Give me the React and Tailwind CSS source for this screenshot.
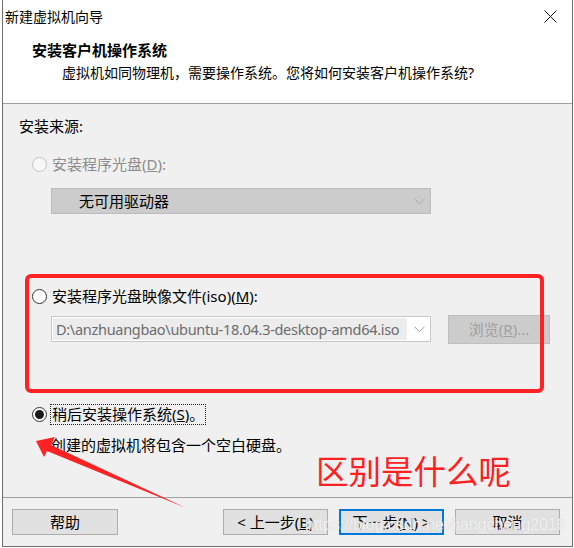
import React from 'react';

const ui = "font-['Noto_Sans','Noto_Sans_CJK_SC',sans-serif]";

function Radio({ state }) {
  if (state === 'disabled') {
    return <div className="w-[15px] h-[15px] rounded-full border border-[#c4c4c4] bg-[#f7f7f7] shrink-0" />;
  }
  return (
    <div className="w-[15px] h-[15px] rounded-full border border-[#333333] bg-white shrink-0 flex items-center justify-center">
      {state === 'on' && <div className="w-[9px] h-[9px] rounded-full bg-[#1a1a1a]" />}
    </div>
  );
}

function Chevron({ color }) {
  return (
    <svg width="11" height="7" viewBox="0 0 11 7" className="shrink-0">
      <path d="M0.5 0.8L5.5 5.8L10.5 0.8" fill="none" stroke={color} strokeWidth="1" />
    </svg>
  );
}

function Button({ children, primary }) {
  return (
    <div
      className={`w-[105px] h-[26px] flex items-center justify-center text-[15px] leading-none text-black bg-[#e1e1e1] ${
        primary ? 'border-2 border-[#0078d7]' : 'border border-[#adadad]'
      }`}
    >
      {children}
    </div>
  );
}

export default function App() {
  return (
    <div className={`relative w-[574px] h-[548px] bg-white overflow-hidden ${ui}`}>
      <div className="ml-[2px] w-[571px] h-[547px] border-x border-b border-[#6f6f6f] bg-[#f0f0f0] flex flex-col">
        {/* title bar */}
        <div className="h-[33px] bg-white flex items-center justify-between pl-[2px] pr-[15px]">
          <span className="text-[14px] leading-none text-black">新建虚拟机向导</span>
          <svg width="13" height="13" viewBox="0 0 13 13">
            <path d="M0.5 0.5L12.5 12.5M12.5 0.5L0.5 12.5" stroke="#111" strokeWidth="1" />
          </svg>
        </div>

        {/* header */}
        <div className="h-[71px] bg-white border-b border-[#a0a0a0] flex flex-col">
          <div className="mt-[7px] h-[20px] pl-[29px] flex items-center text-[15px] font-bold leading-none text-black">
            安装客户机操作系统
          </div>
          <div className="mt-[3px] h-[20px] pl-[59px] flex items-center text-[14px] leading-none text-black">
            虚拟机如同物理机，需要操作系统。您将如何安装客户机操作系统?
          </div>
        </div>

        {/* body */}
        <div className="flex-1 flex flex-col text-[15px] leading-none text-black">
          <div className="mt-[12px] h-[20px] pl-[16px] flex items-center">安装来源:</div>

          <div className="mt-[18px] h-[20px] pl-[29px] flex items-center gap-[5px] text-[#8c8c8c]">
            <Radio state="disabled" />
            <span>
              安装程序光盘(<span className="underline">D</span>):
            </span>
          </div>

          <div className="mt-[14px] ml-[48px] w-[380px] h-[26px] bg-[#cccccc] border border-[#bcbcbc] flex items-center justify-between pl-[27px] pr-[5px]">
            <span>无可用驱动器</span>
            <Chevron color="#a8a8a8" />
          </div>

          <div className="mt-[72px] h-[20px] pl-[29px] flex items-center gap-[5px]">
            <Radio state="off" />
            <span>
              安装程序光盘映像文件(iso)(<span className="underline">M</span>):
            </span>
          </div>

          <div className="mt-[9px] pl-[48px] flex items-start">
            <div className="mt-[1px] w-[380px] h-[26px] bg-white border border-[#c8c8c8] flex items-center justify-between pl-[1px] pr-[5px]">
              <div className="h-[22px] w-[354px] bg-[#ececec] flex items-center pl-[3px] text-[14.5px] text-[#6d6d6d] font-['Noto_Sans',sans-serif] tracking-[-0.3px] overflow-hidden whitespace-nowrap">
                D:\anzhuangbao\ubuntu-18.04.3-desktop-amd64.iso
              </div>
              <Chevron color="#9a9a9a" />
            </div>
            <div className="ml-[17px] w-[102px] h-[29px] bg-[#cccccc] border border-[#bfbfbf] flex items-center justify-center text-[#a0a0a0]">
              浏览(<span className="underline">R</span>)...
            </div>
          </div>

          <div className="mt-[60px] h-[20px] pl-[29px] flex items-center gap-[3px]">
            <Radio state="on" />
            <span className="h-[21px] px-[1px] flex items-center border border-dotted border-[#222]">
              稍后安装操作系统(<span className="underline">S</span>)。
            </span>
          </div>

          <div className="mt-[11px] h-[20px] pl-[48px] flex items-center">创建的虚拟机将包含一个空白硬盘。</div>
        </div>

        {/* footer */}
        <div className="h-[49px] border-t border-[#a0a0a0] flex items-start justify-between pt-[11px] pl-[9px] pr-[12px]">
          <div className="w-[106px] h-[26px] flex items-center justify-center text-[15px] leading-none bg-[#e1e1e1] border border-[#adadad]">
            帮助
          </div>
          <div className="flex gap-[11px]">
            <Button>
              &lt; 上一步(<span className="underline">B</span>)
            </Button>
            <Button primary>
              下一步(<span className="underline">N</span>) &gt;
            </Button>
            <Button>取消</Button>
          </div>
        </div>
      </div>

      {/* annotations */}
      <div className="absolute left-[25px] top-[274px] w-[519px] h-[119px] border-[4px] border-[#ff2222] rounded-[6px] pointer-events-none" />
      <svg className="absolute left-0 top-0 pointer-events-none" width="574" height="548" viewBox="0 0 574 548">
        <polygon points="36,441 55,437 51,445 186,508 47,451 44,457" fill="#ff2222" />
      </svg>
      <div className="absolute left-[316px] top-[454px] text-[32.5px] leading-none text-[#ff2020] font-['Noto_Sans_CJK_SC',sans-serif]">
        区别是什么呢
      </div>
      <div className="absolute left-[305px] top-[517px] text-[16px] leading-none text-white/75 font-['Liberation_Sans',sans-serif] [text-shadow:0_0_1px_#c4c4c4] pointer-events-none">
        https://blog.csdn.net/jiangcheng2016
      </div>
    </div>
  );
}
